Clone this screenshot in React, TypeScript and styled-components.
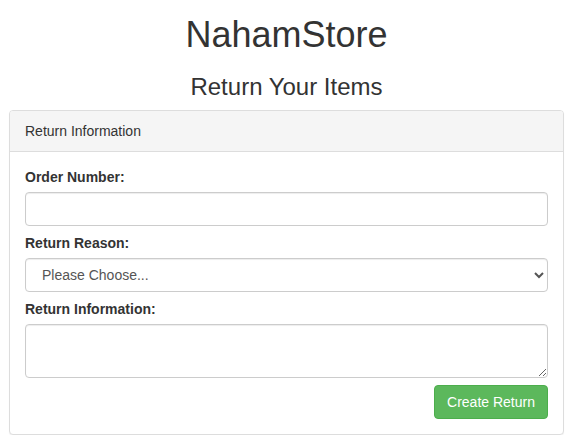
import React from "react";
import styled, { createGlobalStyle } from "styled-components";

const GlobalStyle = createGlobalStyle`
  *, *::before, *::after { box-sizing: border-box; }
  html, body { margin: 0; padding: 0; background: #fff; }
  body {
    font-family: "Liberation Sans", Arial, Helvetica, sans-serif;
    font-size: 14px;
    line-height: 20px;
    color: #333;
  }
`;

const Page = styled.div`
  display: flex;
  flex-direction: column;
  padding: 0 7px 0 9px;
`;

const Title = styled.h1`
  margin: 15px 0 0;
  font-size: 36px;
  line-height: 39.6px;
  font-weight: 500;
  text-align: center;
`;

const Subtitle = styled.h3`
  margin: 19px 0 10px;
  font-size: 24px;
  line-height: 26.4px;
  font-weight: 500;
  text-align: center;
`;

const Panel = styled.section`
  border: 1px solid #ddd;
  border-radius: 4px;
  background: #fff;
  box-shadow: 0 1px 1px rgba(0, 0, 0, 0.05);
`;

const PanelHeading = styled.div`
  padding: 10px 15px;
  background: #f5f5f5;
  border-bottom: 1px solid #ddd;
  border-radius: 3px 3px 0 0;
  font-size: 14px;
  line-height: 20px;
`;

const PanelBody = styled.form`
  display: flex;
  flex-direction: column;
  gap: 7px;
  padding: 15px;
`;

const FormGroup = styled.div`
  display: flex;
  flex-direction: column;
`;

const Label = styled.label`
  font-weight: 700;
  margin-bottom: 5px;
  line-height: 20px;
`;

const fieldBase = `
  width: 100%;
  padding: 6px 12px;
  font-family: "Liberation Sans", Arial, Helvetica, sans-serif;
  font-size: 14px;
  line-height: 20px;
  color: #555;
  background: #fff;
  border: 1px solid #ccc;
  border-radius: 4px;
  box-shadow: inset 0 1px 1px rgba(0, 0, 0, 0.075);
  outline: none;
`;

const Input = styled.input`
  ${fieldBase}
  height: 34px;
`;

const Select = styled.select`
  ${fieldBase}
  height: 34px;
`;

const TextArea = styled.textarea`
  ${fieldBase}
  height: 54px;
  display: block;
`;

const Actions = styled.div`
  display: flex;
  justify-content: flex-end;
`;

const Button = styled.button`
  padding: 6px 12px;
  font-family: "Liberation Sans", Arial, Helvetica, sans-serif;
  font-size: 14px;
  line-height: 20px;
  color: #fff;
  background: #5cb85c;
  border: 1px solid #4cae4c;
  border-radius: 4px;
  cursor: pointer;
`;

export default function App() {
  return (
    <>
      <GlobalStyle />
      <Page>
        <Title>NahamStore</Title>
        <Subtitle>Return Your Items</Subtitle>
        <Panel>
          <PanelHeading>Return Information</PanelHeading>
          <PanelBody onSubmit={(e) => e.preventDefault()}>
            <FormGroup>
              <Label htmlFor="order">Order Number:</Label>
              <Input id="order" type="text" />
            </FormGroup>
            <FormGroup>
              <Label htmlFor="reason">Return Reason:</Label>
              <Select id="reason" defaultValue="">
                <option value="">Please Choose...</option>
                <option value="damaged">Damaged</option>
                <option value="wrong">Wrong Item</option>
              </Select>
            </FormGroup>
            <FormGroup>
              <Label htmlFor="info">Return Information:</Label>
              <TextArea id="info" rows={2} />
            </FormGroup>
            <Actions>
              <Button type="submit">Create Return</Button>
            </Actions>
          </PanelBody>
        </Panel>
      </Page>
    </>
  );
}
